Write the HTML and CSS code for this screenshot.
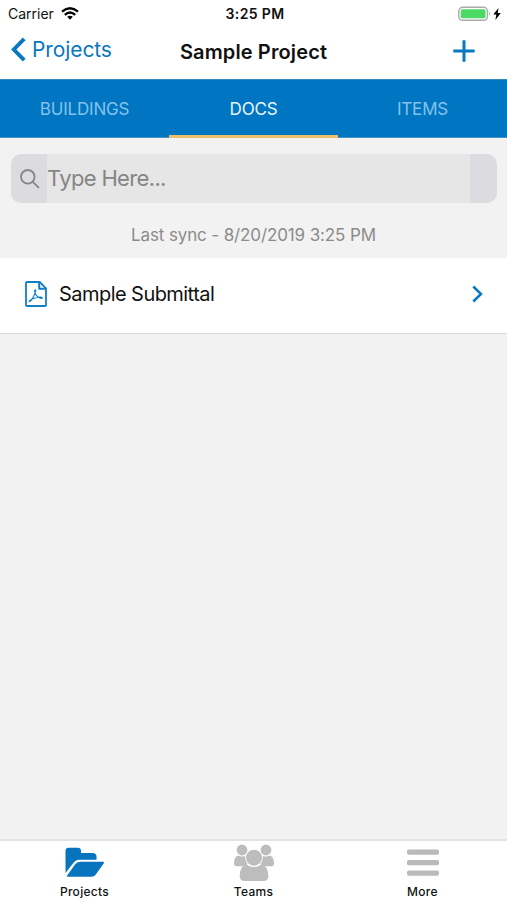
FILE: index.html
```html
<!DOCTYPE html>
<html lang="en">
<head>
<meta charset="utf-8">
<meta name="viewport" content="width=device-width, initial-scale=1">
<title>Sample Project</title>
<link rel="stylesheet" href="styles.css">
</head>
<body>
<header class="header">
  <div class="status">
    <div class="carrier"><span>Carrier</span>
      <svg class="wifi" width="18" height="13" viewBox="0 0 18 13" fill="none" stroke="#000" stroke-width="2.3"><path d="M1 4.6Q9-2.2 17 4.6M3.8 7.8Q9 3.1 14.2 7.8"/><path d="M9 12.7 6.2 9.8Q9 7.8 11.8 9.8Z" fill="#000" stroke="none"/></svg>
    </div>
    <time class="clock">3:25 PM</time>
    <div class="power">
      <svg width="44" height="16" viewBox="0 0 44 16"><rect x=".8" y="1.3" width="28.6" height="13" rx="3.8" fill="#fff" stroke="#aaa" stroke-width="1.4"/><rect x="2.7" y="3.3" width="24.8" height="9" rx="1.5" fill="#4cd964"/><path d="M31 5.6q2 2.2 0 4.4z" fill="#aaa"/><path d="m40.5 2-5.2 6.4h3L37.4 14l5.4-7h-3.1z" fill="#000"/></svg>
    </div>
  </div>
  <div class="navbar">
    <a class="back"><svg width="15" height="25" viewBox="0 0 15 25" fill="none" stroke="#0878bf" stroke-width="3.9"><path d="M13.2 1.8 2.8 12.5l10.4 10.7"/></svg><span>Projects</span></a>
    <h1>Sample Project</h1>
    <button class="add" aria-label="Add"><svg width="22" height="22" viewBox="0 0 22 22" stroke="#0878bf" stroke-width="3"><path d="M11 .3v21.4M.3 11h21.4"/></svg></button>
  </div>
</header>
<nav class="tabs"><a><span>BUILDINGS</span></a><a class="active"><span>DOCS</span></a><a><span>ITEMS</span></a></nav>
<main>
  <div class="search">
    <svg width="20" height="20" viewBox="0 0 20 20" fill="none" stroke="#86868a" stroke-width="1.8"><circle cx="7.8" cy="7.8" r="6.8"/><path d="m12.8 12.8 6.2 6"/></svg>
    <div class="field"><span>Type Here...</span></div>
  </div>
  <p class="sync"><span>Last sync - 8/20/2019 3:25 PM</span></p>
  <a class="row">
    <svg class="pdf" width="22" height="26" viewBox="0 0 22 26" fill="none" stroke="#1080c5" stroke-width="1.8" stroke-linejoin="round"><path d="M2 1h12.7L21 7.3V24q0 1-1 1H2q-1 0-1-1V2q0-1 1-1Z"/><path d="M14.2 1v6.8H21" stroke-width="2"/><path d="M10.3 8.7q-.9 0-.6 2.2.9 4.5 5.8 6.4 2 .7 1.8-.4-.2-1-3.5-.7-4.1.4-7.2 2-3 1.8-2.2 2.5 1.1.5 3-3.1 2.5-4.4 3.4-7.7.2-1.2-.5-1.2Z" stroke-width="1.1"/></svg>
    <span class="title">Sample Submittal</span>
    <svg class="chevron" width="11" height="18" viewBox="0 0 11 18" fill="none" stroke="#0878bf" stroke-width="2.5"><path d="m1.3 1.5 7.7 7.5-7.7 7.5"/></svg>
  </a>
</main>
<nav class="bottom">
  <a><svg width="40" height="31" viewBox="0 0 40 31" fill="#0874c0"><path d="M.5 26V4Q.5.8 3.8.8h9q3.2 0 3.2 3v2.2h11.8q3.7 0 3.7 3.5v3.2H14.3q-3.6 0-6 3.4Z"/><path d="M2 28.7 10 17.4q1.8-2.6 5-2.6h23.2q1.5 0 .6 1.5l-8 11.3q-1.6 2.2-4.3 2.2H3q-1.8 0-1-1.1Z"/></svg><span class="folder-label">Projects</span></a>
  <a><svg width="40" height="38" viewBox="0 0 40 38" fill="#bdbdbd"><circle cx="8" cy="6" r="5.4"/><circle cx="32" cy="6" r="5.4"/><path d="M4 11.5q4 2 7.2.2-.5 5.5 2.5 8.5-3 1-5 2H2q-2 0-2-2.6 0-6.5 4-8.1ZM36 11.5q-4 2-7.2.2.5 5.5-2.5 8.5 3 1 5 2H38q2 0 2-2.6 0-6.5-4-8.1Z"/><circle cx="20" cy="13.7" r="8"/><path d="M12.5 20.5q7.5 5 15 0 6.8 1.5 6.8 11.8 0 4.7-5 4.7H10.7q-5 0-5-4.7 0-10.3 6.8-11.8Z"/></svg><span class="teams-label">Teams</span></a>
  <a><svg width="32" height="28" viewBox="0 0 32 28" fill="#bababa"><rect y=".5" width="32" height="5.3" rx="1.7"/><rect y="11" width="32" height="5.3" rx="1.7"/><rect y="21.5" width="32" height="5.3" rx="1.7"/></svg><span class="more-label">More</span></a>
</nav>
</body>
</html>
```
FILE: styles.css
```css
* { box-sizing: border-box; }
body {
  margin: 0;
  height: 100vh;
  display: flex;
  flex-direction: column;
  background: #f2f2f2;
  color: #111;
  font-family: Inter, "Liberation Sans", sans-serif;
}
svg { display: block; flex: none; }
.header { height: 79px; background: #fff; flex: none; }
.status {
  height: 27px;
  display: grid;
  grid-template-columns: 1fr auto 1fr;
  align-items: center;
  padding: 0 5px 0 8px;
  font-size: 14px;
}
.carrier { display: flex; align-items: center; gap: 7px; }
.clock { font-weight: 600; letter-spacing: .35px; }
.power { justify-self: end; }
.navbar {
  height: 52px;
  display: grid;
  grid-template-columns: 1fr auto 1fr;
  padding: 0 11px;
}
.back { display: flex; align-items: center; gap: 6px; height: 45px; font-size: 21px; letter-spacing: -.1px; color: #0878bf; }
h1 { margin: 0; font-size: 20px; line-height: 51px; font-weight: 600; letter-spacing: .13px; }
.add { justify-self: end; height: 48px; margin-right: 21px; padding: 0; border: 0; background: none; }
.tabs {
  height: 59px;
  flex: none;
  display: grid;
  grid-template-columns: repeat(3, 1fr);
  background: #0075c1;
  border-top: 1px solid #3487be;
  border-bottom: 1px solid #4b94c9;
}
.tabs a {
  display: flex;
  justify-content: center;
  padding-top: 18px;
  font-size: 17px;
  line-height: 22px;
  letter-spacing: -.2px;
  color: #85c2e9;
}
.tabs .active { color: #e9f5fc; margin-bottom: -1px; border-bottom: 3px solid #efc06c; }
main { flex: 1; }
.search {
  height: 49px;
  margin: 16px 10px 0 11px;
  padding: 0 27px 0 9px;
  display: flex;
  align-items: center;
  gap: 7px;
  border-radius: 10px;
  background: #dcdce0;
}
.field {
  flex: 1;
  align-self: stretch;
  background: #e6e6e6;
  color: #858585;
  font-size: 22px;
  letter-spacing: -.65px;
  line-height: 49px;
}
.sync { margin: 0; height: 55px; line-height: 64px; font-size: 17px; letter-spacing: -.12px; color: #8b8b8b; text-align: center; }
.row {
  height: 76px;
  display: flex;
  align-items: center;
  padding: 0 24px 3px 25px;
  background: #fff;
  border-bottom: 1px solid #d7d7d7;
}
.title { flex: 1; margin-left: 12px; font-size: 20px; line-height: 24px; padding-bottom: 1px; letter-spacing: -.55px; }
.bottom {
  height: 61px;
  flex: none;
  display: grid;
  grid-template-columns: repeat(3, 1fr);
  background: #fff;
  border-top: 2px solid #e3e3e3;
}
.bottom a {
  display: grid;
  grid-template-rows: 43px 16px;
  justify-items: center;
  align-items: center;
  font-size: 12px;
  line-height: 14px;
  font-weight: 500;
  letter-spacing: .3px;
}
```
